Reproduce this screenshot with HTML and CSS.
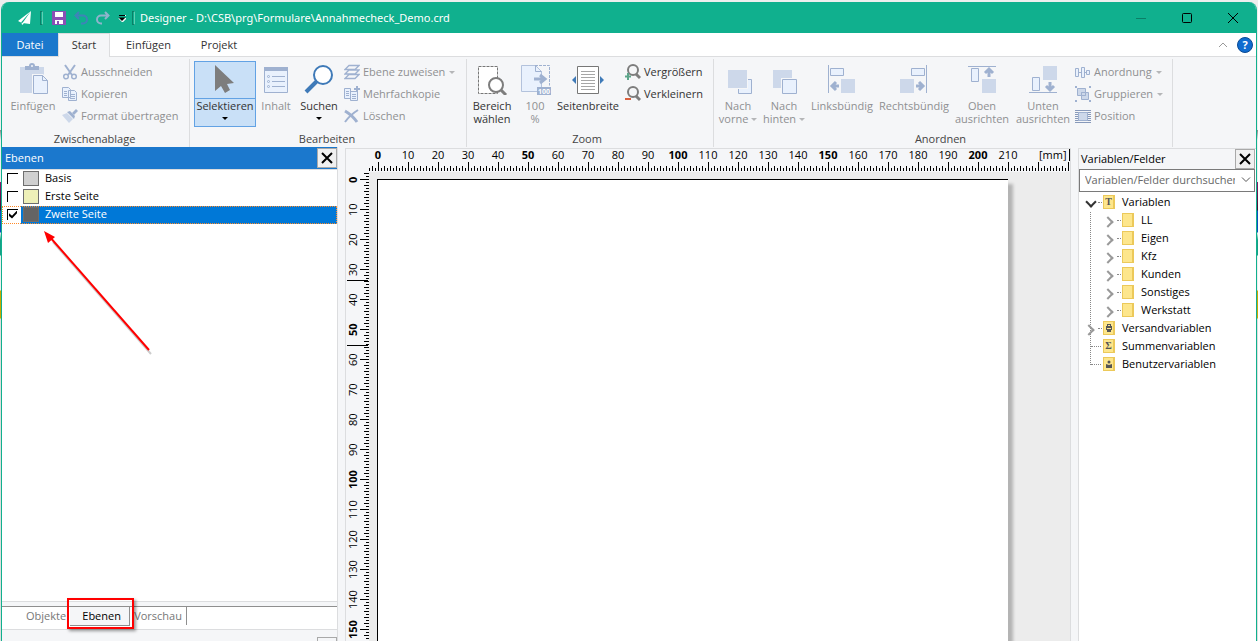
FILE: index.html
```html
<!DOCTYPE html>
<html lang="de">
<head>
<meta charset="utf-8">
<meta name="viewport" content="width=device-width, initial-scale=1">
<title>Designer - D:\CSB\prg\Formulare\Annahmecheck_Demo.crd</title>
<link rel="stylesheet" href="styles.css">
</head>
<body>
<div class="window">

<header class="titlebar">
    <svg class="logo" width="16" height="16" viewBox="0 0 16 16"><path d="M14 1L1 11l3 1.500z M14 1L5.500 13l7.500 1z" fill="#fff"/><path d="M4.500 12.500L5 15l2-1.500z" fill="#fff"/></svg>
    <span class="grip"></span>
    <button class="quick" aria-label="Speichern"><svg width="14" height="14" viewBox="0 0 14 14"><path d="M0 0h14v14H0z" fill="#8a4fb5"/><path d="M3 1h8v5H3z M3 9h8v4H3z" fill="#fff"/><path d="M5 10h2v3H5z" fill="#8a4fb5"/></svg></button>
    <button class="quick" aria-label="Rückgängig"><svg width="14" height="14" viewBox="0 0 14 14" fill="none" stroke="#3f83b8" stroke-width="2"><path d="M5 1L1.500 4.500L5 8M2 4.500h7a4 4 0 0 1 0 8H7"/></svg></button>
    <button class="quick" aria-label="Wiederholen"><svg width="14" height="14" viewBox="0 0 14 14" fill="none" stroke="#8fb3cc" stroke-width="2"><path d="M9 1l3.500 3.500L9 8M12 4.500H5a4 4 0 0 0 0 8h1"/></svg></button>
    <button class="quick more" aria-label="Anpassen"><svg width="8" height="8" viewBox="0 0 8 8"><path d="M1 1.500h7M1 4.500h7L4.500 8z" fill="#fff" stroke="#fff"/><path d="M1 1.500h6" stroke="#000"/><path d="M.500 3.500h7L4 7z"/></svg></button>
    <span class="grip"></span>
    <h1>Designer - D:\CSB\prg\Formulare\Annahmecheck_Demo.crd</h1>
    <div class="winbuttons">
        <button aria-label="Minimieren"><svg width="10" height="10"><path d="M0 5.500h10" stroke="#0b7f67"/></svg></button>
        <button aria-label="Maximieren"><svg width="10" height="10"><rect x=".5" y=".5" width="9" height="9" rx="1" fill="none" stroke="#000"/></svg></button>
        <button aria-label="Schließen"><svg width="10" height="10"><path d="M0 0l10 10M10 0L0 10" stroke="#000"/></svg></button>
    </div>
</header>

<nav class="tabs">
    <button class="tab file">Datei</button>
    <button class="tab active">Start</button>
    <button class="tab insert">Einfügen</button>
    <button class="tab">Projekt</button>
    <div class="help">
        <button aria-label="Menüband minimieren"><svg width="8" height="6"><path d="M0 5l4-4 4 4" fill="none" stroke="#999"/></svg></button>
        <button class="question" aria-label="Hilfe">?</button>
    </div>
</nav>

<section class="ribbon">
    <div class="group clipboard">
        <div class="tools">
            <button class="big w54" disabled>
                <svg width="32" height="32" viewBox="0 0 32 32"><path d="M3 4h24v26H3z" fill="#cdd8ea"/><path d="M8 3h4a3 3 0 0 1 6 0h4v4H8z" fill="#9fb1d0"/><circle cx="15" cy="3" r="1" fill="#f5f6f8"/><path d="M15 11h11l6 6v15H15z" fill="#f5f6f8"/><path d="M16.500 12.500h9l5 5v13h-14z" fill="#e9f1fd" stroke="#9fb1d0"/><path d="M25.500 12.500v5h5" fill="none" stroke="#9fb1d0"/></svg>
                <span>Einfügen</span>
            </button>
            <div class="stack">
                <button class="small" disabled><svg width="16" height="16" viewBox="0 0 16 16" fill="none" stroke="#9fb1d0" stroke-width="2"><path d="M3 1l7 10M13 1L6 11"/><circle cx="4" cy="12.500" r="2.300" stroke-width="1.500"/><circle cx="12" cy="12.500" r="2.300" stroke-width="1.500"/></svg><span>Ausschneiden</span></button>
                <button class="small" disabled><svg width="16" height="16" viewBox="0 0 16 16" fill="#e9f1fd" stroke="#9fb1d0"><path d="M.500 1.500h6l2 2v8h-8zM6.500 4.500h6l2 2v8h-8z"/><path d="M2 5.500h3M2 7.500h3M2 9.500h3M8 8.500h5M8 10.500h5M8 12.500h5"/></svg><span>Kopieren</span></button>
                <button class="small" disabled><svg width="16" height="16" viewBox="0 0 16 16"><path d="M0 7l5-2 6 6-4 4z" fill="#cdd8ea"/><path d="M5 4l3-1 5 5-1 3z" fill="#9fb1d0"/><path d="M10 5l4-4 2 2-4 4z" fill="#9fb1d0"/></svg><span>Format übertragen</span></button>
            </div>
        </div>
        <h2>Zwischenablage</h2>
    </div>

    <div class="group edit">
        <div class="tools">
            <button class="big w62 pressed">
                <svg width="32" height="32" viewBox="0 0 32 32"><path d="M6 2v26l6-5 4 7 5-3-3-6 7-1z" fill="#7d7d7d"/></svg>
                <span>Selektieren</span><i class="arrow"></i>
            </button>
            <button class="big w40" disabled>
                <svg width="32" height="32" viewBox="0 0 32 32"><path d="M4.500 4.500h23v25h-23z" fill="#e9f1fd" stroke="#9fb1d0"/><path d="M4 4h24v4H4z" fill="#9fb1d0"/><g fill="none" stroke="#9fb1d0"><path d="M12 13.500h13M12 18.500h13M12 23.500h13"/><circle cx="8.500" cy="13.500" r="1"/><circle cx="8.500" cy="18.500" r="1"/><circle cx="8.500" cy="23.500" r="1"/></g></svg>
                <span>Inhalt</span>
            </button>
            <button class="big w46">
                <svg width="32" height="32" viewBox="0 0 32 32"><path d="M3 29l11-11" stroke="#3f7ab8" stroke-width="4"/><circle cx="20" cy="12" r="9" fill="#fff" stroke="#3f7ab8" stroke-width="2"/></svg>
                <span>Suchen</span><i class="arrow"></i>
            </button>
            <div class="stack">
                <button class="small" disabled><svg width="16" height="16" viewBox="0 0 16 16" fill="#f5f6f8" stroke="#9fb1d0" stroke-width="1.300"><path d="M1 14.500l4-4h10l-4 4zM1 10l4-4h10l-4 4zM1 5.500l4-4h10l-4 4z"/></svg><span>Ebene zuweisen</span><i class="arrow"></i></button>
                <button class="small" disabled><svg width="16" height="16" viewBox="0 0 16 16" fill="#e9f1fd" stroke="#9fb1d0"><path d="M.500 2.500h6v10h-6zM6.500 5.500h7v9h-7z"/><path d="M2 5.500h3M2 7.500h3M2 9.500h3M8 8.500h4M8 10.500h4M8 12.500h4"/><path d="M13 0v6M10 3h6" stroke-width="2"/></svg><span>Mehrfachkopie</span></button>
                <button class="small" disabled><svg width="16" height="16" viewBox="0 0 16 16" fill="none" stroke="#9fb1d0"><path d="M1 3q7 4 12 11" stroke-width="3"/><path d="M14 2Q6 7 1 14" stroke-width="2"/></svg><span>Löschen</span></button>
            </div>
        </div>
        <h2>Bearbeiten</h2>
    </div>

    <div class="group zoom">
        <div class="tools">
            <button class="big w50">
                <svg width="32" height="32" viewBox="0 0 32 32"><path d="M2.500 3.500h19v27h-19z" fill="#fff" stroke="#777" stroke-dasharray="3 1"/><path d="M24 26l6 6" stroke="#7d7d7d" stroke-width="3"/><circle cx="20" cy="22" r="7" fill="#fff" stroke="#7d7d7d" stroke-width="2"/></svg>
                <span>Bereich<br>wählen</span>
            </button>
            <button class="big w36" disabled>
                <svg width="32" height="32" viewBox="0 0 32 32"><path d="M2.500 2.500h14l6 6v20h-20z" fill="#e9f1fd" stroke="#b3c2dc"/><path d="M16 2.500h14.500v20" fill="none" stroke="#9fb1d0" stroke-dasharray="3 1"/><path d="M16.500 2.500v6h6" fill="none" stroke="#9fb1d0"/><path d="M15 16h10M21 12l5 4-5 4" fill="none" stroke="#9fb1d0" stroke-width="3"/><path d="M18 24h14v8H18z" fill="#9fb1d0"/><text x="19" y="31" class="badge">100</text></svg>
                <span>100<br>%</span>
            </button>
            <button class="big w70">
                <svg width="32" height="32" viewBox="0 0 32 32"><path d="M5.500 3.500h21v27h-21z" fill="#fff" stroke="#777"/><path d="M9 8.500h14M9 11.500h14M9 14.500h14M9 17.500h14M9 20.500h14M9 23.500h14M9 26.500h14" stroke="#a6a6a6"/><path d="M4 13v8l-4-4zM28 13v8l4-4z" fill="#3f7ab8"/></svg>
                <span>Seitenbreite</span>
            </button>
            <div class="stack">
                <button class="small"><svg width="16" height="16" viewBox="0 0 16 16"><circle cx="8" cy="6" r="5" fill="none" stroke="#7d7d7d" stroke-width="2"/><path d="M11 10l4 4" stroke="#7d7d7d" stroke-width="3"/><path d="M3 9v7M0 12.500h6" stroke="#5da58a" stroke-width="2"/></svg><span>Vergrößern</span></button>
                <button class="small"><svg width="16" height="16" viewBox="0 0 16 16"><circle cx="8" cy="6" r="5" fill="none" stroke="#7d7d7d" stroke-width="2"/><path d="M11 10l4 4" stroke="#7d7d7d" stroke-width="3"/><path d="M0 13h6" stroke="#d9603f" stroke-width="2"/></svg><span>Verkleinern</span></button>
            </div>
        </div>
        <h2>Zoom</h2>
    </div>

    <div class="group arrange">
        <div class="tools">
            <button class="big w46" disabled>
                <svg width="32" height="32" viewBox="0 0 32 32"><path d="M16.500 16.500h13v14h-13z" fill="#e9f1fd" stroke="#9fb1d0"/><path d="M6 6h20v20H6z" fill="#f5f6f8"/><path d="M6 7h19v18H6z" fill="#cdd8ea"/></svg>
                <span>Nach<br>vorne <i class="arrow"></i></span>
            </button>
            <button class="big w46" disabled>
                <svg width="32" height="32" viewBox="0 0 32 32"><path d="M5 7h19v18H5z" fill="#cdd8ea"/><path d="M13 15h17v17H13z" fill="#f5f6f8"/><path d="M14.500 16.500h14v14h-14z" fill="#e9f1fd" stroke="#9fb1d0"/></svg>
                <span>Nach<br>hinten <i class="arrow"></i></span>
            </button>
            <button class="big w70" disabled>
                <svg width="32" height="32" viewBox="0 0 32 32"><path d="M2.500 2v28" stroke="#9fb1d0"/><path d="M4.500 5.500h13v7h-13z" fill="#e9f1fd" stroke="#9fb1d0"/><path d="M15 16h14v14H15z" fill="#cdd8ea"/><path d="M13 23H7M10 19l-4 4 4 4" fill="none" stroke="#9fb1d0" stroke-width="3"/></svg>
                <span>Linksbündig</span>
            </button>
            <button class="big w74" disabled>
                <svg width="32" height="32" viewBox="0 0 32 32"><path d="M28.500 2v28" stroke="#9fb1d0"/><path d="M13.500 5.500h13v7h-13z" fill="#e9f1fd" stroke="#9fb1d0"/><path d="M2 16h14v14H2z" fill="#cdd8ea"/><path d="M18 23h6M21 19l4 4-4 4" fill="none" stroke="#9fb1d0" stroke-width="3"/></svg>
                <span>Rechtsbündig</span>
            </button>
            <button class="big w62" disabled>
                <svg width="32" height="32" viewBox="0 0 32 32"><path d="M2 3.500h28" stroke="#9fb1d0"/><path d="M5.500 5.500h7v13h-7z" fill="#e9f1fd" stroke="#9fb1d0"/><path d="M16 16h14v14H16z" fill="#cdd8ea"/><path d="M23 14V7M19 10l4-4 4 4" fill="none" stroke="#9fb1d0" stroke-width="3"/></svg>
                <span>Oben<br>ausrichten</span>
            </button>
            <button class="big w60" disabled>
                <svg width="32" height="32" viewBox="0 0 32 32"><path d="M2 29.500h28" stroke="#9fb1d0"/><path d="M5.500 14.500h7v13h-7z" fill="#e9f1fd" stroke="#9fb1d0"/><path d="M16 3h14v14H16z" fill="#cdd8ea"/><path d="M23 19v7M19 23l4 4 4-4" fill="none" stroke="#9fb1d0" stroke-width="3"/></svg>
                <span>Unten<br>ausrichten</span>
            </button>
            <div class="stack">
                <button class="small" disabled><svg width="16" height="16" viewBox="0 0 16 16" fill="#e9f1fd" stroke="#9fb1d0"><path d="M.500 4.500h3v8h-3zM6.500 3.500h3v10h-3zM11.500 6.500h3v4h-3z"/><path d="M4 8.500h2M10 8.500h1"/></svg><span>Anordnung</span><i class="arrow"></i></button>
                <button class="small" disabled><svg width="16" height="16" viewBox="0 0 16 16" fill="#cdd8ea" stroke="#9fb1d0"><path d="M2.500 2.500h8v7h-8zM6.500 6.500h7v7h-7z"/><path d="M6.500 6.500h4v3h-4z"/><path d="M0 1h2M14 1h2M0 15h2M14 15h2" stroke-width="2"/></svg><span>Gruppieren</span><i class="arrow"></i></button>
                <button class="small" disabled><svg width="16" height="16" viewBox="0 0 16 16"><path d="M0 2.500h16M0 4.500h16M0 6.500h16M0 8.500h16M0 10.500h16M0 12.500h16M0 14.500h16" stroke="#8799ba"/><path d="M3.500 4.500h9v8h-9z" fill="#cdd8ea" stroke="#9fb1d0"/></svg><span>Position</span></button>
            </div>
        </div>
        <h2>Anordnen</h2>
    </div>
</section>

<main class="work">
    <aside class="layers">
        <div class="panelhead blue">
            <h2>Ebenen</h2>
            <button class="close" aria-label="Ebenen schließen"><svg width="12" height="12"><path d="M1 1l10 10M11 1L1 11" stroke="#000" stroke-width="2"/></svg></button>
        </div>
        <div class="layerlist">
            <label class="layer"><input type="checkbox"><span class="swatch basis"></span>Basis</label>
            <label class="layer"><input type="checkbox"><span class="swatch first"></span>Erste Seite</label>
            <label class="layer selected"><input type="checkbox" checked><span class="swatch second"></span>Zweite Seite</label>
            <svg class="pointer" width="112" height="126" viewBox="0 0 112 126">
                <path d="M11 12l98 112" stroke="#000" stroke-opacity=".2" stroke-width="2"/>
                <path d="M7 6l100 114" stroke="#f00" stroke-width="2"/>
                <path d="M2 1l11 6-7 6z" fill="#f00"/>
            </svg>
        </div>
        <div class="paneltabs">
            <button>Objekte</button>
            <button class="current">Ebenen</button>
            <button class="last">Vorschau</button>
        </div>
        <div class="nextpanel"><span></span></div>
    </aside>

    <section class="editor">
        <div class="hruler" id="hruler"><span class="unit">[mm]</span></div>
        <div class="vruler" id="vruler"><span class="mark upper"></span><span class="mark lower"></span></div>
        <div class="canvas"><div class="paper"></div></div>
    </section>

    <aside class="fields">
        <div class="panelhead">
            <h2>Variablen/Felder</h2>
            <button class="close" aria-label="Variablen schließen"><svg width="12" height="12"><path d="M1 1l10 10M11 1L1 11" stroke="#000" stroke-width="2"/></svg></button>
        </div>
        <div class="search">
            <input type="text" aria-label="Variablen/Felder durchsuchen" placeholder="Variablen/Felder durchsuchen">
            <button aria-label="Suchverlauf"><svg width="10" height="6"><path d="M1 .500l4 4 4-4" fill="none" stroke="#555"/></svg></button>
        </div>
        <ul class="tree">
            <li><div class="node"><i class="open"></i><b>T</b>Variablen</div>
                <ul>
                    <li><div class="node"><i class="closed"></i><b></b>LL</div></li>
                    <li><div class="node"><i class="closed"></i><b></b>Eigen</div></li>
                    <li><div class="node"><i class="closed"></i><b></b>Kfz</div></li>
                    <li><div class="node"><i class="closed"></i><b></b>Kunden</div></li>
                    <li><div class="node"><i class="closed"></i><b></b>Sonstiges</div></li>
                    <li><div class="node"><i class="closed"></i><b></b>Werkstatt</div></li>
                </ul>
            </li>
            <li><div class="node"><i class="closed"></i><b><svg width="6" height="8"><path d="M1 0h4v2h1v4H5v2H1V6H0V2h1z" fill="#555"/><path d="M2 1h2v1H2zM1 4h4v1H1z" fill="#fde68c"/></svg></b>Versandvariablen</div></li>
            <li><div class="node"><i></i><b>Σ</b>Summenvariablen</div></li>
            <li><div class="node"><i></i><b><svg width="6" height="8"><circle cx="3" cy="2" r="1.500" fill="#555"/><path d="M0 4l3 1 3-1v4H0z" fill="#555"/></svg></b>Benutzervariablen</div></li>
        </ul>
    </aside>
</main>
</div>

<script>
    // Beschriftung der Lineale, alle 50 mm fett
    function labels(id, max) {
        var ruler = document.getElementById(id);
        for(var mm = 0; mm <= max; mm += 10) {
            var label = document.createElement('span');
            label.className = mm % 50 == 0 ? 'num major' : 'num';
            label.textContent = mm;
            ruler.insertBefore(label, ruler.querySelector('.unit, .mark'));
        }
    }
    labels('hruler', 210);
    labels('vruler', 150);
</script>
</body>
</html>
```
FILE: styles.css
```css
* { box-sizing: border-box; }

body {
    margin: 0;
    height: 100vh;
    overflow: hidden;
    padding: 2px 1px 0 1px;
    background: linear-gradient(#eee 130px, #888 130px, #eee 140px, #eee 182px, #8a1c6c 182px, #401030 210px, #0a4fc0 211px, #0a4fc0 232px, #eee 233px, #16a085 240px, #16a085 255px, #eee 256px, #eee 290px, #c9a800 291px, #c9a800 318px, #ddd 319px);
    font-family: "Open Sans", "Noto Sans", sans-serif;
    font-size: 11px;
    line-height: 14px;
    color: #000;
}

h1, h2 { margin: 0; font-size: 11px; font-weight: normal; }

button {
    margin: 0;
    padding: 0;
    border: 0;
    background: none;
    font: inherit;
    color: inherit;
}

svg { display: block; flex: none; }

.window {
    height: 100%;
    display: flex;
    flex-direction: column;
    border: solid #10b08e;
    border-width: 0 1px;
    border-radius: 8px 8px 0 0;
    background: #f5f6f8;
    overflow: hidden;
}

/* Titelleiste */
.titlebar {
    flex: none;
    display: flex;
    align-items: center;
    height: 31px;
    padding-left: 15px;
    background: #10b08e;
    color: #fff;
}
.titlebar h1 { margin-left: 5px; font-family: "Noto Sans", "Open Sans", sans-serif; }
.grip {
    width: 3px;
    height: 14px;
    border: 1px solid #0b7f67;
    border-right-color: #5fd0b5;
}
.logo + .grip { margin: 0 9px 0 7px; }
.quick { width: 14px; margin-right: 8px; }
.more { width: 8px; margin-right: 6px; }
.winbuttons { display: flex; margin-left: auto; }
.winbuttons button {
    display: flex;
    justify-content: center;
    width: 46px;
}

/* Reiter */
.tabs {
    flex: none;
    display: flex;
    height: 24px;
    background: #fff;
    border-bottom: 1px solid #dcdddf;
    color: #333;
}
.tab { width: 64px; height: 23px; }
.file { width: 56px; background: #1a78cc; color: #fff; }
.active {
    width: 52px;
    height: 24px;
    padding-bottom: 2px;
    background: #f5f6f8;
    border: 1px solid #dcdddf;
    border-bottom: 0;
}
.insert { width: 77px; }
.help {
    display: flex;
    align-items: center;
    gap: 10px;
    margin-left: auto;
    padding-right: 3px;
}
.question {
    width: 16px;
    height: 16px;
    border: 1px solid #0b4a94;
    border-radius: 50%;
    background: #0f6cd0;
    color: #fff;
    font-weight: bold;
    line-height: 14px;
}

/* Menüband */
.ribbon { flex: none; display: flex; height: 90px; color: #333; }
.group {
    display: flex;
    flex-direction: column;
    border-right: 1px solid #dcdddf;
    margin-top: 2px;
    padding: 2px 0 0 4px;
}
.group h2 { margin-top: 5px; padding-right: 6px; text-align: center; color: #444; }
.clipboard { width: 188px; }
.edit { width: 277px; }
.zoom { width: 247px; padding-left: 0; }
.arrange { width: 459px; padding-left: 1px; }
.tools { display: flex; height: 66px; }

.big {
    display: flex;
    flex-direction: column;
    align-items: center;
    justify-content: flex-start;
    height: 66px;
    padding-top: 2px;
    line-height: 13px;
    white-space: nowrap;
}
.big > span { margin-top: 4px; }
.w36 { width: 36px; }
.w40 { width: 40px; }
.w46 { width: 46px; }
.w50 { width: 50px; }
.w54 { width: 54px; }
.w60 { width: 60px; }
.w62 { width: 62px; }
.w70 { width: 70px; }
.w74 { width: 74px; }
.pressed {
    border: 1px solid #62a2e4;
    padding-top: 1px;
    background: linear-gradient(#c9e0f7 36px, #62a2e4 36px, #62a2e4 37px, #c9e0f7 37px);
}

.stack { margin-left: 2px; }
.small {
    display: flex;
    align-items: center;
    gap: 3px;
    height: 22px;
    white-space: nowrap;
}
.big:disabled, .small:disabled { color: #8f9092; }

.arrow {
    display: inline-block;
    border: solid transparent;
    border-width: 3px 3px 0 3px;
    border-top-color: #000;
}
.big > .arrow { margin-top: 5px; }
.small .arrow { margin-left: 1px; }
:disabled .arrow { border-top-color: #b5b6b8; vertical-align: 2px; }
.badge { font-size: 7px; font-weight: bold; fill: #fff; }

/* Arbeitsbereich */
.work {
    flex: 1;
    min-height: 0;
    display: grid;
    grid-template-columns: 336px 1fr 178px;
    column-gap: 7px;
}
.panelhead { display: flex; height: 22px; align-items: center; }
.panelhead h2 { flex: 1; padding-left: 2px; }
.blue { background: #1b78cd; color: #fff; }
.blue h2 { padding-left: 3px; }
.close {
    display: flex;
    align-items: center;
    justify-content: center;
    width: 20px;
    height: 20px;
    background: #f0f0f0;
    border: 1px solid #a9a9a9;
}

.layers {
    display: flex;
    flex-direction: column;
    min-height: 0;
    border-right: 1px solid #dcdddf;
}
.layerlist {
    position: relative;
    flex: 1;
    background: #fff;
    border-top: 1px solid #dcdddf;
    border-bottom: 1px solid #dcdddf;
}
.layer {
    display: flex;
    align-items: center;
    height: 18px;
    padding: 0 0 2px 5px;
}
.layer input {
    appearance: none;
    width: 11px;
    height: 11px;
    margin: 0 5px 0 0;
    background: #fff;
    border: solid #000;
    border-width: 1px 0 0 1px;
}
.layer input:checked::before {
    content: "";
    display: block;
    width: 8px;
    height: 8px;
    margin: 1px;
    background: #000;
    clip-path: polygon(0 35%, 38% 65%, 100% 0, 100% 35%, 38% 100%, 0 70%);
}
.swatch { width: 16px; height: 15px; margin: 1px 6px 0 0; border: 1px solid #6e6e6e; }
.basis { background: #d0d0d0; }
.first { background: #eef0b8; }
.second { background: #646464; }
.selected {
    background: linear-gradient(90deg, #fff 19px, #0078d7 19px);
    color: #fff;
    outline: 1px dotted #ff8a28;
    outline-offset: -1px;
}
.pointer { position: absolute; left: 40px; top: 60px; }

.paneltabs {
    display: flex;
    height: 23px;
    margin-top: 4px;
    padding-left: 20px;
    background: #fff;
    border-top: 1px solid #8f8f8f;
    color: #777;
}
.paneltabs button { height: 18px; padding: 0 4px; }
.paneltabs .current {
    position: relative;
    height: 19px;
    width: 60px;
    padding-left: 8px;
    background: #f5f6f8;
    border-bottom: 1px solid #8f8f8f;
    border-right: 1px solid #8f8f8f;
    color: #000;
}
.current::after {
    content: "";
    position: absolute;
    inset: -9px -5px -4px -3px;
    border: 2px solid #f00;
    box-shadow: 2px 2px 3px #0006;
}
.paneltabs .last { border-right: 1px solid #8f8f8f; }
.nextpanel {
    display: flex;
    justify-content: flex-end;
    height: 12px;
    padding-top: 7px;
    border-top: 1px solid #dcdddf;
}
.nextpanel span { width: 20px; border: 1px solid #a9a9a9; border-bottom: 0; }

/* Lineale und Blatt */
.editor {
    display: grid;
    grid-template: 23px 1fr / 23px 1fr;
    min-height: 0;
    margin-top: 1px;
    overflow: hidden;
    border: solid #dcdddf;
    border-width: 1px 1px 0 1px;
}
.hruler {
    grid-column: 1 / 3;
    position: relative;
    display: flex;
    padding-left: 17px;
    line-height: 12px;
    background:
        linear-gradient(#000, #000) 100% 0 / 1px 12px,
        repeating-linear-gradient(90deg, #000 0 1px, transparent 1px 30px) 32px 13px / 900px 9px,
        repeating-linear-gradient(90deg, #000 0 1px, transparent 1px 6px) 26px 17px / 900px 5px,
        repeating-linear-gradient(90deg, #000 0 1px, transparent 1px 3px) 23px 19px / 900px 3px;
    background-repeat: no-repeat;
}
.num { flex: none; width: 30px; text-align: center; }
.major { font-weight: bold; }
.unit { margin-left: 16px; }
.vruler {
    position: relative;
    min-height: 0;
    overflow: hidden;
    background:
        repeating-linear-gradient(#000 0 1px, transparent 1px 30px) 14px 7px / 9px 900px,
        repeating-linear-gradient(#000 0 1px, transparent 1px 6px) 18px 1px / 5px 900px,
        repeating-linear-gradient(#000 0 1px, transparent 1px 3px) 20px 1px / 3px 900px;
    background-repeat: no-repeat;
}
.vruler .num {
    display: block;
    width: 14px;
    height: 30px;
    writing-mode: vertical-rl;
    transform: rotate(180deg);
}
.vruler .num:first-child { margin-top: -7px; }
.mark {
    position: absolute;
    left: 1px;
    width: 21px;
    height: 1px;
    background: #000;
}
.upper { top: 108px; }
.lower { top: 173px; }
.canvas { padding: 7px 62px 0 8px; background: #ececec; }
.paper {
    height: 100%;
    background: #fff;
    border: solid #000;
    border-width: 1px 0 0 1px;
    box-shadow: 5px 5px 3px #b4b4b4;
}

/* Variablenliste */
.fields {
    display: flex;
    flex-direction: column;
    margin-top: 1px;
    padding-right: 1px;
    border: solid #dcdddf;
    border-width: 1px 0 0 1px;
    background: #fff;
}
.fields .panelhead { height: 20px; background: #f5f6f8; }
.search {
    display: flex;
    height: 23px;
    padding-bottom: 2px;
    border: 1px solid #7a7a7a;
}
.search input {
    flex: 1;
    min-width: 0;
    padding: 0 0 0 5px;
    border: 0;
    outline: 0;
    font: inherit;
    background: none;
}
.search input::placeholder { color: #666; }
.search button {
    display: flex;
    align-items: center;
    justify-content: center;
    width: 16px;
    margin-left: 3px;
}

.tree, .tree ul { margin: 0; padding: 0; list-style: none; }
.tree { position: relative; padding: 1px 0 0 4px; }
.tree ul { padding-left: 19px; }
.tree::before {
    content: "";
    position: absolute;
    left: 11px;
    top: 20px;
    height: 153px;
    border-left: 1px dotted #888;
}
.node { position: relative; display: flex; align-items: center; height: 18px; }
.node i { position: relative; width: 20px; height: 18px; }
.node i::before {
    content: "";
    position: absolute;
    left: 8px;
    top: 9px;
    width: 10px;
    border-top: 1px dotted #888;
}
.node .open::before, .node .closed::before { left: 15px; width: 4px; }
.node i::after { position: absolute; width: 6px; height: 6px; }
.open::after, .closed::after {
    content: "";
    left: 4px;
    top: 5px;
    border: solid #333;
    border-width: 0 2px 2px 0;
    transform: rotate(45deg);
}
.closed::after { left: 2px; top: 7px; border-color: #999; transform: rotate(-45deg); }
.node b {
    display: flex;
    align-items: center;
    justify-content: center;
    width: 12px;
    height: 14px;
    margin-right: 7px;
    background: #fde68c;
    border: 1px solid #ecc95a;
    border-right-width: 2px;
    font: bold 10px/12px "Liberation Serif", serif;
    color: #555;
}
```
